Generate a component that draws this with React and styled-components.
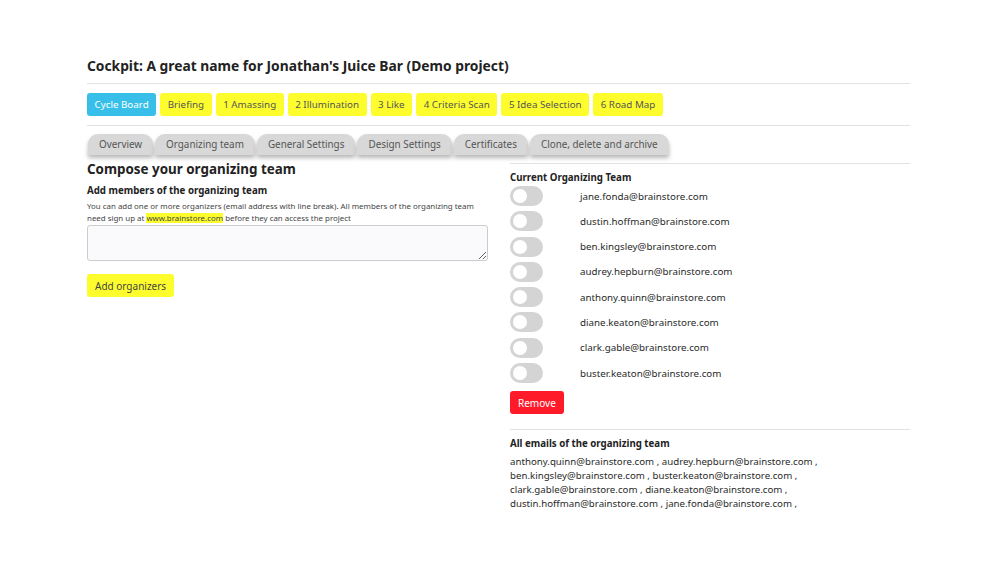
import React from 'react';
import styled, { createGlobalStyle } from 'styled-components';

const Global = createGlobalStyle`
  body {
    margin: 0;
    background: #fff;
    font-family: "Noto Sans", "Open Sans", sans-serif;
    color: #222;
  }
`;

const Page = styled.div`
  width: 823px;
  margin-left: 87px;
  padding-top: 55px;
`;

const Title = styled.h1`
  font-size: 13.8px;
  font-weight: 700;
  margin: 0;
  line-height: 22px;
  color: #222;
`;

const Rule = styled.hr`
  border: 0;
  border-top: 1px solid #e2e2e2;
  margin: ${p => p.$m || '8px 0'};
`;

const PhaseBar = styled.div`
  display: flex;
  gap: 4px;
`;

const PhaseButton = styled.button`
  font-family: inherit;
  font-size: 9.8px;
  height: 23px;
  padding: 0 7.5px;
  border: 0;
  border-radius: 3px;
  background: ${p => (p.$active ? '#38bfe9' : '#fdfd2e')};
  color: ${p => (p.$active ? '#fff' : '#555')};
  cursor: pointer;
`;

const TabBar = styled.div`
  display: flex;
  gap: 2px;
  padding-left: 1px;
`;

const Tab = styled.div`
  font-size: 9.9px;
  color: #555;
  background: #d8d8d8;
  height: 21px;
  line-height: 21px;
  padding: 0 11px;
  border-radius: 10px 10px 0 0;
  box-shadow: 0 3px 4px rgba(0, 0, 0, 0.28);
`;

const Columns = styled.div`
  display: grid;
  grid-template-columns: 401px 400px;
  gap: 22px;
  margin-top: 4px;
`;

const Heading = styled.h2`
  font-size: 13.4px;
  font-weight: 700;
  margin: 0;
  line-height: 20px;
`;

const SubHeading = styled.h3`
  font-size: 9.7px;
  font-weight: 700;
  margin: ${p => p.$m || '4px 0 0'};
  line-height: 16px;
`;

const Note = styled.p`
  font-size: 7.9px;
  line-height: 11.6px;
  margin: 2px 0 0;
  color: #444;
`;

const Mark = styled.span`
  background: #fdfd2e;
`;

const TextBox = styled.textarea`
  display: block;
  box-sizing: border-box;
  width: 100%;
  height: 36px;
  margin-top: 1px;
  border: 1px solid #ccc;
  border-radius: 3px;
  background: #fafafc;
  resize: vertical;
`;

const ActionButton = styled.button`
  font-family: inherit;
  font-size: 10px;
  height: 23px;
  padding: 0 8px;
  border: 0;
  border-radius: 3px;
  background: ${p => p.$bg};
  color: ${p => p.$fg};
  margin-top: ${p => p.$mt || '0'};
`;

const MemberList = styled.div`
  display: flex;
  flex-direction: column;
  gap: 5.3px;
`;

const MemberRow = styled.div`
  display: flex;
  align-items: center;
  height: 20px;
`;

const Toggle = styled.span`
  position: relative;
  width: 33px;
  height: 20px;
  border-radius: 10px;
  background: #d4d4d4;
  flex-shrink: 0;

  &::after {
    content: '';
    position: absolute;
    left: 3px;
    top: 3px;
    width: 14px;
    height: 14px;
    border-radius: 50%;
    background: #fff;
  }
`;

const Email = styled.span`
  font-size: 9.8px;
  color: #2a2a2a;
  margin-left: 37px;
`;

const AllEmails = styled.div`
  font-size: 9.7px;
  line-height: 14px;
  color: #2a2a2a;
  margin-top: 3px;
`;

const phases = ['Briefing', '1 Amassing', '2 Illumination', '3 Like', '4 Criteria Scan', '5 Idea Selection', '6 Road Map'];
const tabs = ['Overview', 'Organizing team', 'General Settings', 'Design Settings', 'Certificates', 'Clone, delete and archive'];
const members = [
  'jane.fonda@brainstore.com',
  'dustin.hoffman@brainstore.com',
  'ben.kingsley@brainstore.com',
  'audrey.hepburn@brainstore.com',
  'anthony.quinn@brainstore.com',
  'diane.keaton@brainstore.com',
  'clark.gable@brainstore.com',
  'buster.keaton@brainstore.com',
];
const sorted = [
  ['anthony.quinn@brainstore.com', 'audrey.hepburn@brainstore.com'],
  ['ben.kingsley@brainstore.com', 'buster.keaton@brainstore.com'],
  ['clark.gable@brainstore.com', 'diane.keaton@brainstore.com'],
  ['dustin.hoffman@brainstore.com', 'jane.fonda@brainstore.com'],
];

export default function App() {
  return (
    <Page>
      <Global />
      <Title>Cockpit: A great name for Jonathan's Juice Bar (Demo project)</Title>
      <Rule $m="6px 0 9px" />
      <PhaseBar>
        <PhaseButton $active>Cycle Board</PhaseButton>
        {phases.map(p => <PhaseButton key={p}>{p}</PhaseButton>)}
      </PhaseBar>
      <Rule $m="9px 0 8px" />
      <TabBar>
        {tabs.map(t => <Tab key={t}>{t}</Tab>)}
      </TabBar>
      <Columns>
        <div>
          <Heading>Compose your organizing team</Heading>
          <SubHeading>Add members of the organizing team</SubHeading>
          <Note>
            You can add one or more organizers (email address with line break). All members of the organizing team
            need sign up at <Mark>www.brainstore.com</Mark> before they can access the project
          </Note>
          <TextBox />
          <ActionButton $bg="#fdfd2e" $fg="#444" $mt="13px">Add organizers</ActionButton>
        </div>
        <div>
          <Rule $m="4px 0 6px" />
          <SubHeading $m="0">Current Organizing Team</SubHeading>
          <MemberList>
            {members.map(m => (
              <MemberRow key={m}>
                <Toggle />
                <Email>{m}</Email>
              </MemberRow>
            ))}
          </MemberList>
          <ActionButton $bg="#ff1a2a" $fg="#fff" $mt="8px">Remove</ActionButton>
          <Rule $m="15px 0 6px" />
          <SubHeading $m="0">All emails of the organizing team</SubHeading>
          <AllEmails>
            {sorted.map(pair => (
              <div key={pair[0]}>{pair[0]} , {pair[1]} ,</div>
            ))}
          </AllEmails>
        </div>
      </Columns>
    </Page>
  );
}
